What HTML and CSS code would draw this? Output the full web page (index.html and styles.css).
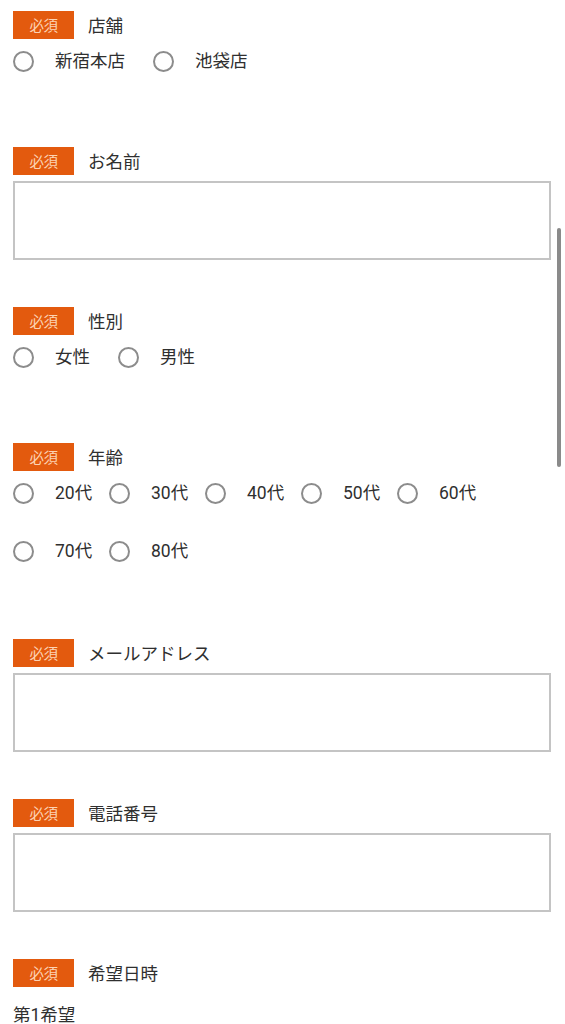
FILE: index.html
```html
<!DOCTYPE html>
<html lang="ja">
<head>
<meta charset="utf-8">
<title>予約フォーム</title>
<link rel="stylesheet" href="styles.css">
</head>
<body>
<form class="form">
  <div class="field field-radio">
    <div class="head"><span class="badge">必須</span><span class="label">店舗</span></div>
    <div class="radios">
      <label class="opt"><span class="circle"></span><span class="txt">新宿本店</span></label>
      <label class="opt"><span class="circle"></span><span class="txt">池袋店</span></label>
    </div>
  </div>
  <div class="field">
    <div class="head"><span class="badge">必須</span><span class="label">お名前</span></div>
    <div class="box"></div>
  </div>
  <div class="field field-radio">
    <div class="head"><span class="badge">必須</span><span class="label">性別</span></div>
    <div class="radios">
      <label class="opt"><span class="circle"></span><span class="txt">女性</span></label>
      <label class="opt"><span class="circle"></span><span class="txt">男性</span></label>
    </div>
  </div>
  <div class="field field-radio">
    <div class="head"><span class="badge">必須</span><span class="label">年齢</span></div>
    <div class="radios ages">
      <label class="opt"><span class="circle"></span><span class="txt">20代</span></label>
      <label class="opt"><span class="circle"></span><span class="txt">30代</span></label>
      <label class="opt"><span class="circle"></span><span class="txt">40代</span></label>
      <label class="opt"><span class="circle"></span><span class="txt">50代</span></label>
      <label class="opt"><span class="circle"></span><span class="txt">60代</span></label>
      <label class="opt"><span class="circle"></span><span class="txt">70代</span></label>
      <label class="opt"><span class="circle"></span><span class="txt">80代</span></label>
    </div>
  </div>
  <div class="field">
    <div class="head"><span class="badge">必須</span><span class="label">メールアドレス</span></div>
    <div class="box"></div>
  </div>
  <div class="field">
    <div class="head"><span class="badge">必須</span><span class="label">電話番号</span></div>
    <div class="box"></div>
  </div>
  <div class="field">
    <div class="head"><span class="badge">必須</span><span class="label">希望日時</span></div>
    <div class="sub">第1希望</div>
  </div>
</form>
<div class="scrollbar"></div>
</body>
</html>
```
FILE: styles.css
```css
html, body {
  margin: 0;
  padding: 0;
  background: #ffffff;
}
body {
  font-family: "Noto Sans CJK JP", "Noto Sans", sans-serif;
  color: #333333;
  overflow: hidden;
  height: 1024px;
}
.form {
  padding: 11px 14px 0 13px;
}
.field {
  margin-bottom: 47px;
}
.head {
  display: flex;
  align-items: center;
  gap: 14px;
  height: 28px;
}
.badge {
  width: 61px;
  height: 28px;
  background: #e35a0e;
  color: #fcd3b4;
  font-size: 14.5px;
  line-height: 28px;
  text-align: center;
  letter-spacing: -0.5px;
}
.label {
  font-size: 17.5px;
  line-height: 20px;
  color: #2f2f2f;
}
.radios {
  display: flex;
  flex-wrap: wrap;
  column-gap: 28px;
  margin-top: 12px;
  padding-bottom: 29px;
}
.ages {
  column-gap: 0;
  row-gap: 38px;
  padding-bottom: 31px;
}
.ages .opt {
  width: 96px;
}
.opt {
  display: flex;
  align-items: center;
  height: 20px;
}
.circle {
  box-sizing: border-box;
  width: 21px;
  height: 21px;
  border: 2px solid #8c8c8c;
  border-radius: 50%;
  background: #fff;
  margin-right: 21px;
  flex: none;
}
.txt {
  font-family: Roboto, "Noto Sans CJK JP", sans-serif;
  font-size: 17.5px;
  line-height: 20px;
  color: #2f2f2f;
}
.box {
  box-sizing: border-box;
  margin-top: 6px;
  height: 79px;
  border: 2px solid #c4c4c4;
  background: #fff;
}
.sub {
  font-family: Roboto, "Noto Sans CJK JP", sans-serif;
  margin-top: 18px;
  font-size: 17.5px;
  line-height: 20px;
  color: #2f2f2f;
}
.scrollbar {
  position: fixed;
  left: 557px;
  top: 228px;
  width: 4px;
  height: 239px;
  border-radius: 2px;
  background: #8a8a8a;
}
```
